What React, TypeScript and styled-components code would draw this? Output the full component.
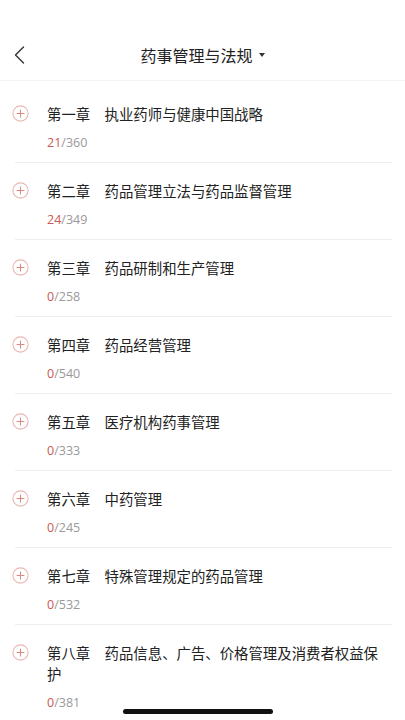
import React from "react"
import styled, { createGlobalStyle } from "styled-components"

const GlobalStyle = createGlobalStyle`
  html, body {
    margin: 0;
    padding: 0;
    background: #fff;
    overflow: hidden;
  }
  body {
    font-family: "Noto Sans CJK SC", "Noto Sans", sans-serif;
    color: #222;
  }
`

const Page = styled.div`
  width: 405px;
  height: 720px;
  position: relative;
  overflow: hidden;
  background: #fff;
`

const Header = styled.div`
  margin-top: 30px;
  height: 50px;
  display: flex;
  align-items: center;
  justify-content: center;
  position: relative;
  border-bottom: 1px solid #f4f4f4;
`

const Back = styled.div`
  position: absolute;
  left: 9px;
  top: 14px;
  width: 20px;
  height: 22px;
  display: flex;
  align-items: center;
  justify-content: center;
`

const Title = styled.div`
  font-size: 16px;
  line-height: 22px;
  color: #222;
  display: flex;
  align-items: center;
`

const Caret = styled.span`
  display: inline-block;
  width: 0;
  height: 0;
  margin-left: 6px;
  border-left: 3.5px solid transparent;
  border-right: 3.5px solid transparent;
  border-top: 4px solid #333;
`

const List = styled.div`
  padding-top: 5px;
`

const Row = styled.div`
  margin: 0 13px 0 15px;
  padding: 17px 0 11px;
  border-bottom: 1px solid #eeeeee;
  display: flex;
  align-items: flex-start;
`

const IconBox = styled.div`
  width: 35px;
  height: 21px;
  margin-left: -3px;
  display: flex;
  align-items: center;
  flex-shrink: 0;
`

const Body = styled.div`
  flex: 1;
  min-width: 0;
`

const ChapterTitle = styled.div`
  font-size: 14.4px;
  line-height: 21px;
  color: #222;
  padding-right: 8px;
`

const Count = styled.div`
  margin-top: 11px;
  font-size: 12.5px;
  line-height: 16px;
  color: #999;
  font-family: "Open Sans", "Noto Sans", sans-serif;
`

const Done = styled.span`
  color: #c95a52;
`

const HomeBar = styled.div`
  position: absolute;
  left: 123px;
  bottom: 6px;
  width: 150px;
  height: 5px;
  border-radius: 3px;
  background: #111;
`

const chapters = [
  { no: "第一章", name: "执业药师与健康中国战略", done: 21, total: 360 },
  { no: "第二章", name: "药品管理立法与药品监督管理", done: 24, total: 349 },
  { no: "第三章", name: "药品研制和生产管理", done: 0, total: 258 },
  { no: "第四章", name: "药品经营管理", done: 0, total: 540 },
  { no: "第五章", name: "医疗机构药事管理", done: 0, total: 333 },
  { no: "第六章", name: "中药管理", done: 0, total: 245 },
  { no: "第七章", name: "特殊管理规定的药品管理", done: 0, total: 532 },
  { no: "第八章", name: "药品信息、广告、价格管理及消费者权益保护", done: 0, total: 381 },
]

function PlusIcon() {
  return (
    <svg width="17" height="17" viewBox="0 0 17 17" fill="none">
      <circle cx="8.5" cy="8.5" r="7.6" stroke="#e9b8b5" strokeWidth="1.1" />
      <path d="M8.5 5v7M5 8.5h7" stroke="#d98a84" strokeWidth="1.1" strokeLinecap="round" />
    </svg>
  )
}

export default function App() {
  return (
    <Page>
      <GlobalStyle />
      <Header>
        <Back>
          <svg width="11" height="18" viewBox="0 0 11 18" fill="none">
            <path d="M9.5 1L1.5 9l8 8" stroke="#333" strokeWidth="1.4" strokeLinecap="round" strokeLinejoin="round" />
          </svg>
        </Back>
        <Title>
          药事管理与法规
          <Caret />
        </Title>
      </Header>
      <List>
        {chapters.map((c) => (
          <Row key={c.no}>
            <IconBox>
              <PlusIcon />
            </IconBox>
            <Body>
              <ChapterTitle>{`${c.no}\u3000${c.name}`}</ChapterTitle>
              <Count>
                <Done>{c.done}</Done>/{c.total}
              </Count>
            </Body>
          </Row>
        ))}
      </List>
      <HomeBar />
    </Page>
  )
}
